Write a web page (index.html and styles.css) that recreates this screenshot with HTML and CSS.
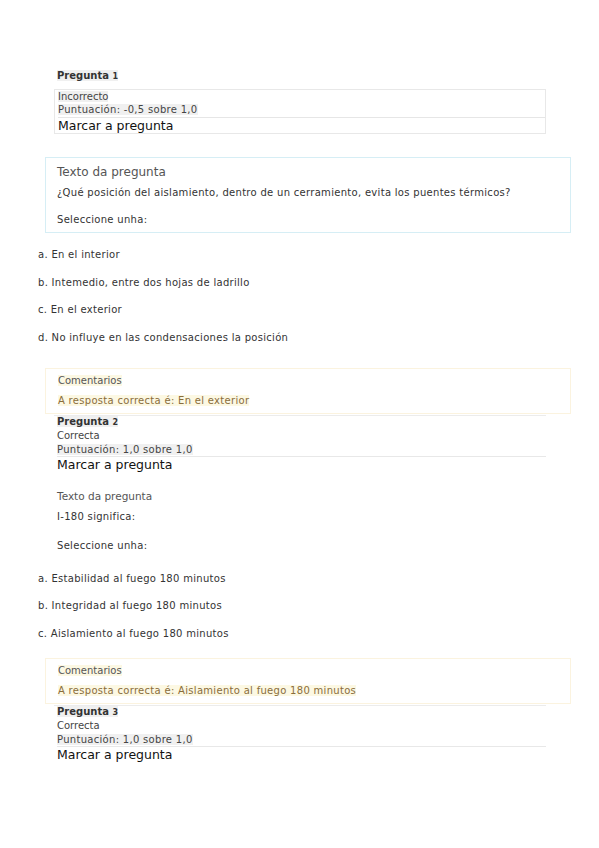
FILE: index.html
```html
<!DOCTYPE html>
<html>
<head>
<meta charset="utf-8">
<link rel="stylesheet" href="styles.css">
</head>
<body>
<div class="page">
  <div class="q q1">
    <div class="qno"><span class="hl">Pregunta <span class="num">1</span></span></div>
    <div class="info boxed">
      <div class="state"><span class="hl">Incorrecto</span></div>
      <div class="grade"><span class="hl">Puntuación: -0,5 sobre 1,0</span></div>
      <div class="flag">Marcar a pregunta</div>
    </div>
    <div class="qtext framed">
      <div class="qtitle">Texto da pregunta</div>
      <div class="qbody">¿Qué posición del aislamiento, dentro de un cerramiento, evita los puentes térmicos?</div>
      <div class="prompt">Seleccione unha:</div>
    </div>
    <ul class="answers">
      <li>a. En el interior</li>
      <li>b. Intemedio, entre dos hojas de ladrillo</li>
      <li>c. En el exterior</li>
      <li>d. No influye en las condensaciones la posición</li>
    </ul>
    <div class="feedback">
      <div class="fbtitle"><span class="fhl">Comentarios</span></div>
      <div class="fbans"><span class="fhl">A resposta correcta é: En el exterior</span></div>
    </div>
  </div>

  <div class="q q2">
    <div class="info lined">
      <div class="qno2"><span class="hl">Pregunta <span class="num">2</span></span></div>
      <div class="state"><span>Correcta</span></div>
      <div class="grade"><span class="hl">Puntuación: 1,0 sobre 1,0</span></div>
      <div class="flag">Marcar a pregunta</div>
    </div>
    <div class="qtext plain">
      <div class="qtitle small">Texto da pregunta</div>
      <div class="qbody">I-180 significa:</div>
      <div class="prompt">Seleccione unha:</div>
    </div>
    <ul class="answers">
      <li>a. Estabilidad al fuego 180 minutos</li>
      <li>b. Integridad al fuego 180 minutos</li>
      <li>c. Aislamiento al fuego 180 minutos</li>
    </ul>
    <div class="feedback">
      <div class="fbtitle"><span class="fhl">Comentarios</span></div>
      <div class="fbans"><span class="fhl">A resposta correcta é: Aislamiento al fuego 180 minutos</span></div>
    </div>
  </div>

  <div class="q q3">
    <div class="info lined">
      <div class="qno2"><span class="hl">Pregunta <span class="num">3</span></span></div>
      <div class="state"><span>Correcta</span></div>
      <div class="grade"><span class="hl">Puntuación: 1,0 sobre 1,0</span></div>
      <div class="flag">Marcar a pregunta</div>
    </div>
  </div>
</div>
</body>
</html>
```

FILE: styles.css
```css
html, body {
  margin: 0;
  padding: 0;
  background: #ffffff;
}
body {
  font-family: "DejaVu Sans", Verdana, sans-serif;
  font-size: 10px;
  letter-spacing: 0.3px;
  color: #3a3a3a;
}
.page {
  padding-top: 69px;
  width: 599px;
}
.hl {
  background: #f0f0f0;
}
.qno {
  margin-left: 57px;
  font-weight: bold;
  letter-spacing: 0;
  line-height: 13px;
  height: 13px;
  color: #333;
}
.num {
  font-size: 8px;
}
.info {
  margin-left: 54px;
  width: 492px;
  box-sizing: border-box;
}
.info.boxed {
  margin-top: 7px;
  border: 1px solid #e8e8e8;
  padding-left: 3px;
}
.state, .grade {
  line-height: 13px;
  height: 13px;
  color: #444;
}
.info.boxed .grade {
  border-bottom: 1px solid #e6e6e6;
  height: 14px;
  line-height: 13px;
}
.flag {
  font-size: 12.5px;
  letter-spacing: 0;
  color: #111;
  line-height: 15px;
  height: 16px;
}
.info.boxed .flag {
  line-height: 15px;
  height: 15px;
}
.qtext.framed {
  margin: 23px 0 0 45px;
  width: 526px;
  height: 76px;
  box-sizing: border-box;
  border: 1px solid #d6eef5;
  padding: 6px 0 0 11px;
}
.qtitle {
  font-size: 12px;
  letter-spacing: 0;
  line-height: 16px;
  color: #555;
}
.qbody {
  margin-top: 6px;
  line-height: 13px;
  color: #333;
}
.prompt {
  margin-top: 14px;
  line-height: 13px;
  color: #333;
}
.answers {
  list-style: none;
  margin: 15px 0 0 38px;
  padding: 0;
}
.answers li {
  line-height: 13px;
  height: 13px;
  margin-bottom: 14.5px;
  color: #333;
}
.feedback {
  margin: 18px 0 0 45px;
  width: 526px;
  height: 46px;
  box-sizing: border-box;
  border: 1px solid #fbf3df;
  padding: 5px 0 0 12px;
}
.q1 .feedback {
  margin-top: 24px;
}
.fhl {
  background: #fcf8e3;
}
.fbtitle {
  line-height: 13px;
  letter-spacing: 0;
  color: #555;
}
.fbans {
  margin-top: 7px;
  line-height: 13px;
  color: #8a6d3b;
}
.info.lined {
  margin-top: 1px;
  border-top: 1px solid #ececec;
  padding-left: 3px;
}
.qno2 {
  font-weight: bold;
  letter-spacing: 0;
  line-height: 11px;
  height: 11px;
  color: #333;
}
.state span {
  letter-spacing: 0;
}
.info.lined .state {
  height: 14px;
  padding-top: 2px;
  line-height: 14px;
}
.info.lined .grade {
  border-bottom: 1px solid #e8e8e8;
  height: 13px;
}
.qtext.plain {
  margin: 17px 0 0 57px;
}
.qtitle.small {
  font-size: 10.5px;
  line-height: 13px;
}
.q2 .qbody { margin-top: 7px; }
.q2 .prompt { margin-top: 16px; }
.q2 .answers { margin-top: 20px; }
```
